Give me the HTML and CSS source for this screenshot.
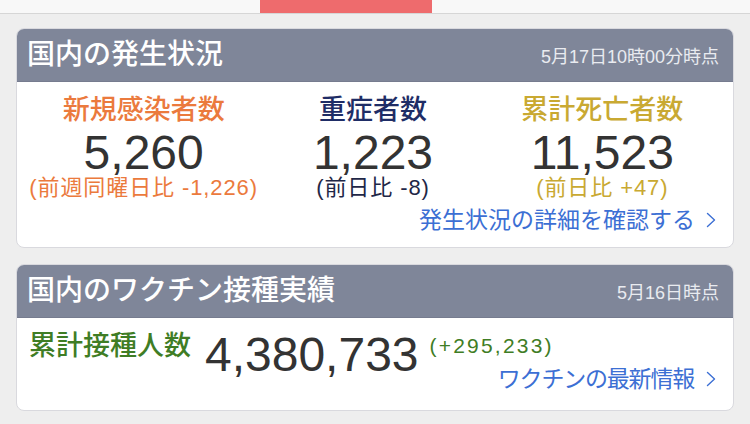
FILE: index.html
```html
<!DOCTYPE html>
<html lang="ja">
<head>
<meta charset="utf-8">
<title>国内の状況</title>
<link rel="stylesheet" href="styles.css">
</head>
<body>
<div class="topbar"><div class="tab"></div></div>

<section class="card">
  <header class="card-head">
    <h2 class="card-title">国内の発生状況</h2>
    <span class="card-date">5月17日10時00分時点</span>
  </header>
  <div class="card-body stats-body">
    <div class="stats">
      <div class="stat">
        <div class="stat-label orange">新規感染者数</div>
        <div class="stat-num">5,260</div>
        <div class="stat-sub orange">(前週同曜日比 -1,226)</div>
      </div>
      <div class="stat">
        <div class="stat-label navy">重症者数</div>
        <div class="stat-num">1,223</div>
        <div class="stat-sub navy">(前日比 -8)</div>
      </div>
      <div class="stat">
        <div class="stat-label gold">累計死亡者数</div>
        <div class="stat-num">11,523</div>
        <div class="stat-sub gold">(前日比 +47)</div>
      </div>
    </div>
    <a class="more more-1" href="#">発生状況の詳細を確認する<svg class="chev" viewBox="0 0 10 16" width="10" height="16"><path d="M1.5 1.5 L8.5 8 L1.5 14.5" fill="none" stroke="#3c6fd4" stroke-width="1.4" stroke-linecap="round" stroke-linejoin="round"/></svg></a>
  </div>
</section>

<section class="card card-2">
  <header class="card-head">
    <h2 class="card-title">国内のワクチン接種実績</h2>
    <span class="card-date">5月16日時点</span>
  </header>
  <div class="card-body vac-body">
    <div class="vac-row">
      <div class="vac-label">累計接種人数</div>
      <div class="vac-num">4,380,733</div>
      <div class="vac-diff">(+295,233)</div>
    </div>
    <a class="more more-2" href="#">ワクチンの最新情報<svg class="chev" viewBox="0 0 10 16" width="10" height="16"><path d="M1.5 1.5 L8.5 8 L1.5 14.5" fill="none" stroke="#3c6fd4" stroke-width="1.4" stroke-linecap="round" stroke-linejoin="round"/></svg></a>
  </div>
</section>
</body>
</html>
```
FILE: styles.css
```css
html, body {
  margin: 0;
  padding: 0;
}
body {
  width: 750px;
  height: 424px;
  overflow: hidden;
  background: #eeeeee;
  font-family: "Liberation Sans", "Noto Sans CJK JP", sans-serif;
  color: #333;
}
.topbar {
  height: 13px;
  background: #f8f8f8;
  border-bottom: 1px solid #d6d6d6;
  display: flex;
}
.tab {
  margin-left: 260px;
  width: 172px;
  height: 13px;
  background: #ee6b6d;
}
.card {
  margin: 14px 16px 0;
  background: #fff;
  border: 1px solid #d9d9de;
  border-radius: 8px;
  overflow: hidden;
}
.card-2 {
  margin-top: 16px;
}
.card-head {
  height: 53px;
  background: #7f8699;
  border-bottom: 1px solid #767c8f;
  box-sizing: border-box;
  display: flex;
  align-items: center;
  justify-content: space-between;
  padding: 0 14px 0 10px;
}
.card-title {
  margin: 0;
  font-size: 28px;
  font-weight: 500;
  color: #fff;
  line-height: 1;
}
.card-date {
  font-size: 18px;
  color: #e9ebf0;
}
.stats-body {
  padding: 10px 16px 13px 12px;
}
.stats {
  display: grid;
  grid-template-columns: 1fr 1fr 1fr;
}
.stat {
  display: flex;
  flex-direction: column;
  align-items: center;
}
.stat-label {
  font-size: 27px;
  line-height: 36px;
  font-weight: 500;
}
.stat-num {
  margin-top: 3px;
  font-size: 48px;
  line-height: 44px;
  color: #333;
}
.stat-sub {
  font-size: 22px;
  line-height: 25px;
  letter-spacing: 0.9px;
}
.orange { color: #eb7a3d; }
.navy { color: #1f2d66; }
.gold { color: #c9a932; }
.stat-sub.navy { color: #1f2747; }
.more {
  display: flex;
  justify-content: flex-end;
  align-items: center;
  font-size: 23px;
  line-height: 28px;
  color: #3c6fd4;
  text-decoration: none;
}
.more-1 {
  margin-top: 6px;
}
.chev {
  margin-left: 11px;
  margin-right: 1px;
}
.vac-body {
  padding: 10px 16px 17px 12px;
}
.vac-row {
  display: flex;
  align-items: flex-start;
  height: 36px;
}
.vac-label {
  font-size: 27px;
  line-height: 36px;
  font-weight: 500;
  color: #3f7d25;
}
.vac-num {
  margin-left: 14px;
  margin-top: 5px;
  font-size: 48px;
  line-height: 44px;
  color: #333;
}
.vac-diff {
  margin-left: 11px;
  margin-top: 5px;
  font-size: 21px;
  line-height: 26px;
  letter-spacing: 2.2px;
  color: #3f7d25;
}
.more-2 {
  margin-top: 1px;
  letter-spacing: -1.2px;
}
.more-2 .chev {
  margin-left: 12px;
}
```
